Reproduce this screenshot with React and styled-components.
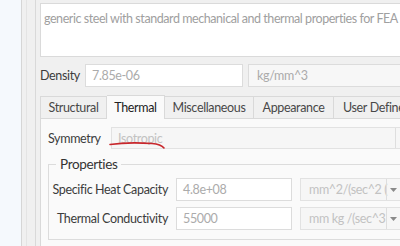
import React from "react";
import styled, { createGlobalStyle } from "styled-components";

const Global = createGlobalStyle`
  html, body { margin: 0; padding: 0; background: #f5f9fd; }
  body {
    font-family: "Lato", "Open Sans", sans-serif;
    font-size: 12.5px;
    letter-spacing: -0.35px;
    color: #3a3a3a;
  }
  * { box-sizing: border-box; }
`;

const Root = styled.div`
  display: flex;
  width: 400px;
  height: 246px;
  overflow: hidden;
  background: #f5f9fd;
`;

const Gutter = styled.div`
  width: 21px;
  flex: none;
`;

const Layer = styled.div`
  display: flex;
  flex: none;
  border-left: 1px solid ${(p) => p.$line};
  padding-left: ${(p) => p.$pad}px;
  background: #f0f0f0;
`;

const Content = styled.div`
  display: flex;
  flex-direction: column;
  width: 400px;
  flex: none;
`;

const Description = styled.div`
  margin-top: 3px;
  height: 54px;
  background: #ffffff;
  border: 1px solid #dadada;
  padding: 6px 0 0 3px;
  color: #a0a0a0;
  line-height: 17px;
  letter-spacing: -0.44px;
  white-space: nowrap;
`;

const DensityRow = styled.div`
  display: flex;
  align-items: center;
  margin-top: 7px;
  height: 23px;
  gap: 5px;
`;

const Label = styled.span`
  color: #3c3c3c;
  white-space: nowrap;
  width: ${(p) => (p.$w ? `${p.$w}px` : "auto")};
  text-align: ${(p) => p.$align || "left"};
  flex: none;
`;

const Field = styled.div`
  height: ${(p) => p.$h || 23}px;
  width: ${(p) => p.$w}px;
  flex: none;
  background: ${(p) => p.$bg || "#ffffff"};
  border: 1px solid #dcdcdc;
  color: #ababab;
  display: flex;
  align-items: center;
  padding-left: ${(p) => p.$pl || 6}px;
  white-space: nowrap;
  overflow: hidden;
  position: relative;
`;

const TabBar = styled.div`
  display: flex;
  align-items: flex-end;
  margin-top: 8px;
  height: 24px;
`;

const Tab = styled.div`
  height: ${(p) => (p.$active ? 24 : 23)}px;
  width: ${(p) => p.$w}px;
  display: flex;
  align-items: center;
  justify-content: ${(p) => (p.$start ? "flex-start" : "center")};
  padding-left: ${(p) => (p.$start ? 9 : 0)}px;
  border: 1px solid #d9d9d9;
  border-left: ${(p) => (p.$first ? "1px solid #d9d9d9" : "none")};
  border-bottom: ${(p) => (p.$active ? "none" : "1px solid #d9d9d9")};
  background: ${(p) => (p.$active ? "#fafafa" : "#f0f0f0")};
  color: ${(p) => (p.$active ? "#222" : "#484848")};
  white-space: nowrap;
  flex: none;
`;

const Panel = styled.div`
  flex: 1;
  background: #fafafa;
  border-left: 1px solid #d9d9d9;
  padding: 8px 0 0 7px;
  display: flex;
  flex-direction: column;
`;

const SymRow = styled.div`
  display: flex;
  align-items: center;
  gap: 12px;
  height: 22px;
  position: relative;
`;

const Combo = styled(Field)`
  background: #f6f6f6;
  border-color: #e2e2e2;
  color: #c2c2c2;
`;

const DropSep = styled.div`
  position: absolute;
  top: 0;
  bottom: 0;
  left: ${(p) => p.$x}px;
  width: 1px;
  background: #dedede;
`;

const Arrow = styled.svg`
  position: absolute;
  left: ${(p) => p.$x}px;
  top: 50%;
  margin-top: -2px;
`;

const Squiggle = styled.svg`
  position: absolute;
  left: 62px;
  top: 15px;
  overflow: visible;
`;

const Group = styled.div`
  position: relative;
  margin-top: 15px;
  height: 76px;
  border: 1px solid #dcdcdc;
  border-right: none;
  padding-top: 13px;
  display: flex;
  flex-direction: column;
  gap: 6px;
`;

const Legend = styled.span`
  position: absolute;
  top: -10px;
  left: 7px;
  padding: 0 4px;
  background: #fafafa;
  font-size: 13.5px;
  color: #333;
  line-height: 18px;
`;

const PropRow = styled.div`
  display: flex;
  align-items: center;
  gap: 8px;
`;

const ArrowIcon = ({ x }) => (
  <Arrow $x={x} width="7" height="4" viewBox="0 0 7 4">
    <path d="M0 0 L7 0 L3.5 4 Z" fill="#8a8a8a" />
  </Arrow>
);

export default function App() {
  return (
    <>
      <Global />
      <Root>
        <Gutter />
        <Layer $line="#d6d6d6" $pad={4}>
          <Layer $line="#e4e4e4" $pad={8}>
            <Layer $line="#d9d9d9" $pad={4}>
              <Content>
                <Description>
                  generic steel with standard mechanical and thermal properties for FEA
                </Description>
                <DensityRow>
                  <Label $w={40}>Density</Label>
                  <Field $w={158} $bg="#ffffff">7.85e-06</Field>
                  <Field $w={160} $bg="#f7f7f7" $pl={8}>kg/mm^3</Field>
                </DensityRow>
                <TabBar>
                  <Tab $first $w={67}>Structural</Tab>
                  <Tab $active $w={58}>Thermal</Tab>
                  <Tab $w={89}>Miscellaneous</Tab>
                  <Tab $w={80}>Appearance</Tab>
                  <Tab $w={80} $start>User Defined</Tab>
                </TabBar>
                <Panel>
                  <SymRow>
                    <Label $w={51}>Symmetry</Label>
                    <Combo $w={300} $h={22}>
                      Isotropic
                      <DropSep $x={283} />
                    </Combo>
                    <Squiggle width="56" height="8" viewBox="0 0 56 8">
                      <path
                        d="M0 2.5 C 10 1, 28 0.5, 42 1.5 C 48 2, 52 3.5, 54 6"
                        fill="none"
                        stroke="#c8262b"
                        strokeWidth="1.6"
                        strokeLinecap="round"
                      />
                    </Squiggle>
                  </SymRow>
                  <Group>
                    <Legend>Properties</Legend>
                    <PropRow>
                      <Label $w={119} $align="right">Specific Heat Capacity</Label>
                      <Field $w={116} $h={23}>4.8e+08</Field>
                      <Combo $w={110} $h={23} $pl={8}>
                        mm^2/(sec^2 (
                        <DropSep $x={85} />
                        <ArrowIcon x={89} />
                      </Combo>
                    </PropRow>
                    <PropRow>
                      <Label $w={119} $align="right">Thermal Conductivity</Label>
                      <Field $w={116} $h={23}>55000</Field>
                      <Combo $w={110} $h={23} $pl={8}>
                        mm kg /(sec^3
                        <DropSep $x={85} />
                        <ArrowIcon x={89} />
                      </Combo>
                    </PropRow>
                  </Group>
                </Panel>
              </Content>
            </Layer>
          </Layer>
        </Layer>
      </Root>
    </>
  );
}
